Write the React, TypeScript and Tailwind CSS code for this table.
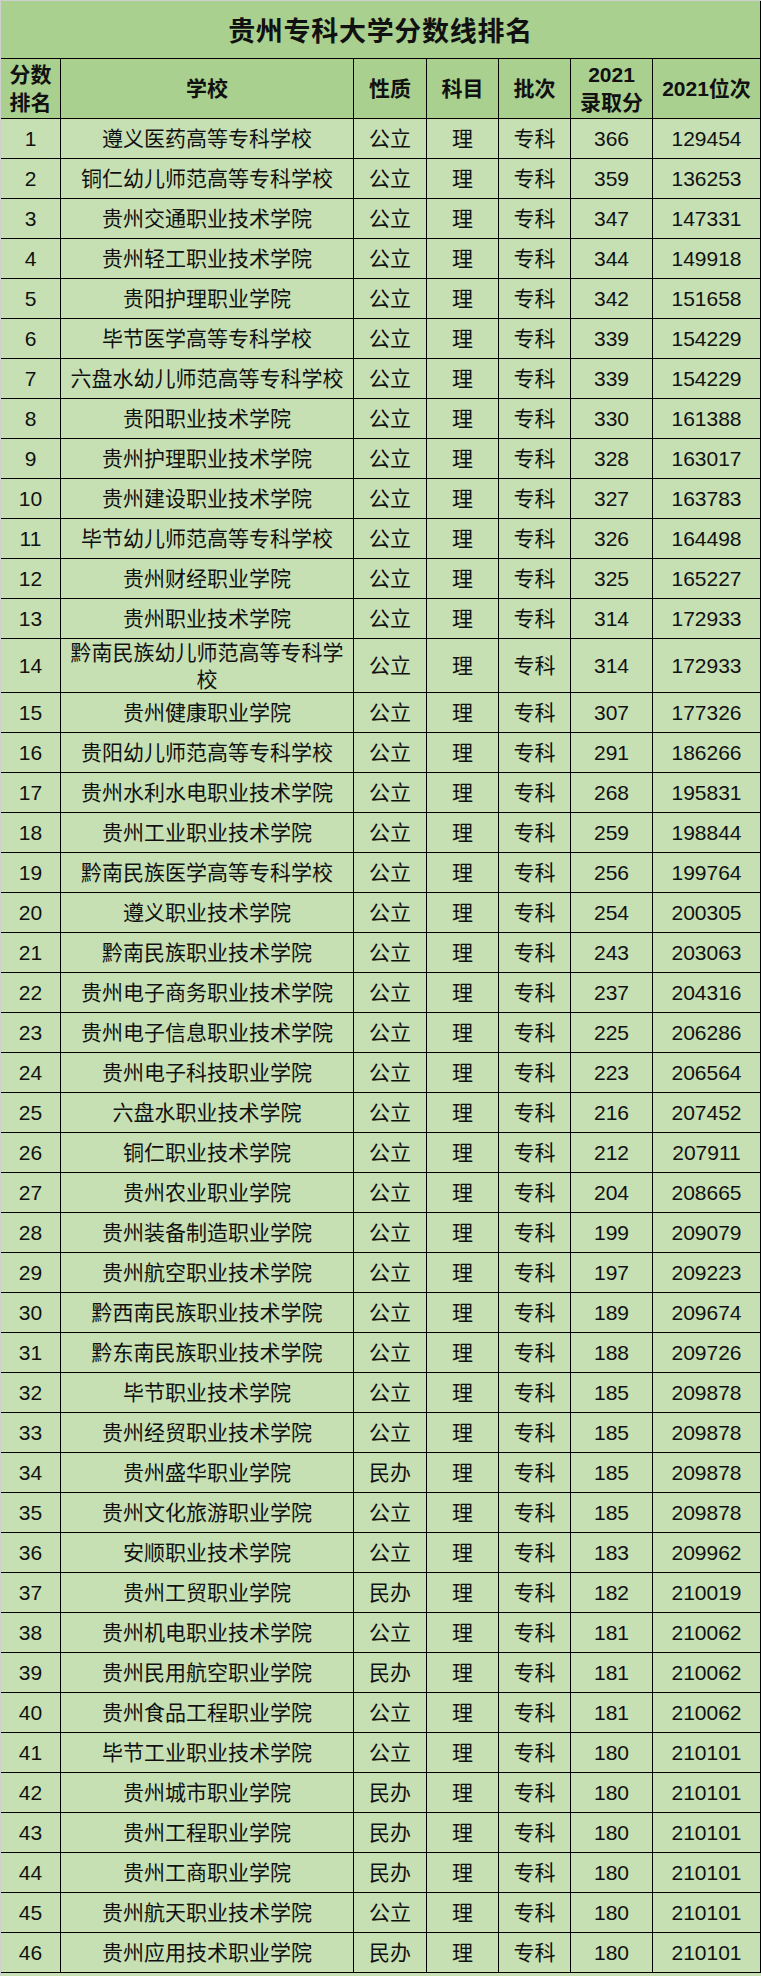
import React from "react";

type Row = [number, string, string, number, number];

const rows: Row[] = [
  [1, "遵义医药高等专科学校", "公立", 366, 129454],
  [2, "铜仁幼儿师范高等专科学校", "公立", 359, 136253],
  [3, "贵州交通职业技术学院", "公立", 347, 147331],
  [4, "贵州轻工职业技术学院", "公立", 344, 149918],
  [5, "贵阳护理职业学院", "公立", 342, 151658],
  [6, "毕节医学高等专科学校", "公立", 339, 154229],
  [7, "六盘水幼儿师范高等专科学校", "公立", 339, 154229],
  [8, "贵阳职业技术学院", "公立", 330, 161388],
  [9, "贵州护理职业技术学院", "公立", 328, 163017],
  [10, "贵州建设职业技术学院", "公立", 327, 163783],
  [11, "毕节幼儿师范高等专科学校", "公立", 326, 164498],
  [12, "贵州财经职业学院", "公立", 325, 165227],
  [13, "贵州职业技术学院", "公立", 314, 172933],
  [14, "黔南民族幼儿师范高等专科学校", "公立", 314, 172933],
  [15, "贵州健康职业学院", "公立", 307, 177326],
  [16, "贵阳幼儿师范高等专科学校", "公立", 291, 186266],
  [17, "贵州水利水电职业技术学院", "公立", 268, 195831],
  [18, "贵州工业职业技术学院", "公立", 259, 198844],
  [19, "黔南民族医学高等专科学校", "公立", 256, 199764],
  [20, "遵义职业技术学院", "公立", 254, 200305],
  [21, "黔南民族职业技术学院", "公立", 243, 203063],
  [22, "贵州电子商务职业技术学院", "公立", 237, 204316],
  [23, "贵州电子信息职业技术学院", "公立", 225, 206286],
  [24, "贵州电子科技职业学院", "公立", 223, 206564],
  [25, "六盘水职业技术学院", "公立", 216, 207452],
  [26, "铜仁职业技术学院", "公立", 212, 207911],
  [27, "贵州农业职业学院", "公立", 204, 208665],
  [28, "贵州装备制造职业学院", "公立", 199, 209079],
  [29, "贵州航空职业技术学院", "公立", 197, 209223],
  [30, "黔西南民族职业技术学院", "公立", 189, 209674],
  [31, "黔东南民族职业技术学院", "公立", 188, 209726],
  [32, "毕节职业技术学院", "公立", 185, 209878],
  [33, "贵州经贸职业技术学院", "公立", 185, 209878],
  [34, "贵州盛华职业学院", "民办", 185, 209878],
  [35, "贵州文化旅游职业学院", "公立", 185, 209878],
  [36, "安顺职业技术学院", "公立", 183, 209962],
  [37, "贵州工贸职业学院", "民办", 182, 210019],
  [38, "贵州机电职业技术学院", "公立", 181, 210062],
  [39, "贵州民用航空职业学院", "民办", 181, 210062],
  [40, "贵州食品工程职业学院", "公立", 181, 210062],
  [41, "毕节工业职业技术学院", "公立", 180, 210101],
  [42, "贵州城市职业学院", "民办", 180, 210101],
  [43, "贵州工程职业学院", "民办", 180, 210101],
  [44, "贵州工商职业学院", "民办", 180, 210101],
  [45, "贵州航天职业技术学院", "公立", 180, 210101],
  [46, "贵州应用技术职业学院", "民办", 180, 210101],
];

const cell =
  "flex items-center justify-center text-center border-r border-b border-black";

export default function App() {
  return (
    <div
      className="w-[761px] min-h-[1976px] bg-[#c6e0b4] text-[#111] border-t border-l border-[#cfcfcf]"
      style={{ fontFamily: '"Liberation Sans", "Noto Sans CJK SC", sans-serif' }}
    >
      <div className="h-[58px] bg-[#a9d08e] border-b border-r border-black flex items-center justify-center pt-[5px]">
        <span className="text-[27px] tracking-[0.7px] font-bold leading-none">贵州专科大学分数线排名</span>
      </div>
      <div className="grid grid-cols-[60px_293px_73px_72px_72px_82px_108px] bg-[#a9d08e] font-bold text-[21px] leading-[28px]">
        <div className={`${cell} h-[60px]`}>分数<br />排名</div>
        <div className={`${cell} h-[60px]`}>学校</div>
        <div className={`${cell} h-[60px]`}>性质</div>
        <div className={`${cell} h-[60px]`}>科目</div>
        <div className={`${cell} h-[60px]`}>批次</div>
        <div className={`${cell} h-[60px]`}>2021<br />录取分</div>
        <div className={`${cell} h-[60px]`}>2021位次</div>
      </div>
      <div className="grid grid-cols-[60px_293px_73px_72px_72px_82px_108px] text-[21px] leading-[27px]">
        {rows.map((r) => {
          const h = r[0] === 14 ? "h-[54px]" : "h-[40px]";
          return (
            <React.Fragment key={r[0]}>
              <div className={`${cell} ${h}`}>{r[0]}</div>
              <div className={`${cell} ${h} px-[8px]`}>{r[1]}</div>
              <div className={`${cell} ${h}`}>{r[2]}</div>
              <div className={`${cell} ${h}`}>理</div>
              <div className={`${cell} ${h}`}>专科</div>
              <div className={`${cell} ${h}`}>{r[3]}</div>
              <div className={`${cell} ${h}`}>{r[4]}</div>
            </React.Fragment>
          );
        })}
      </div>
    </div>
  );
}
